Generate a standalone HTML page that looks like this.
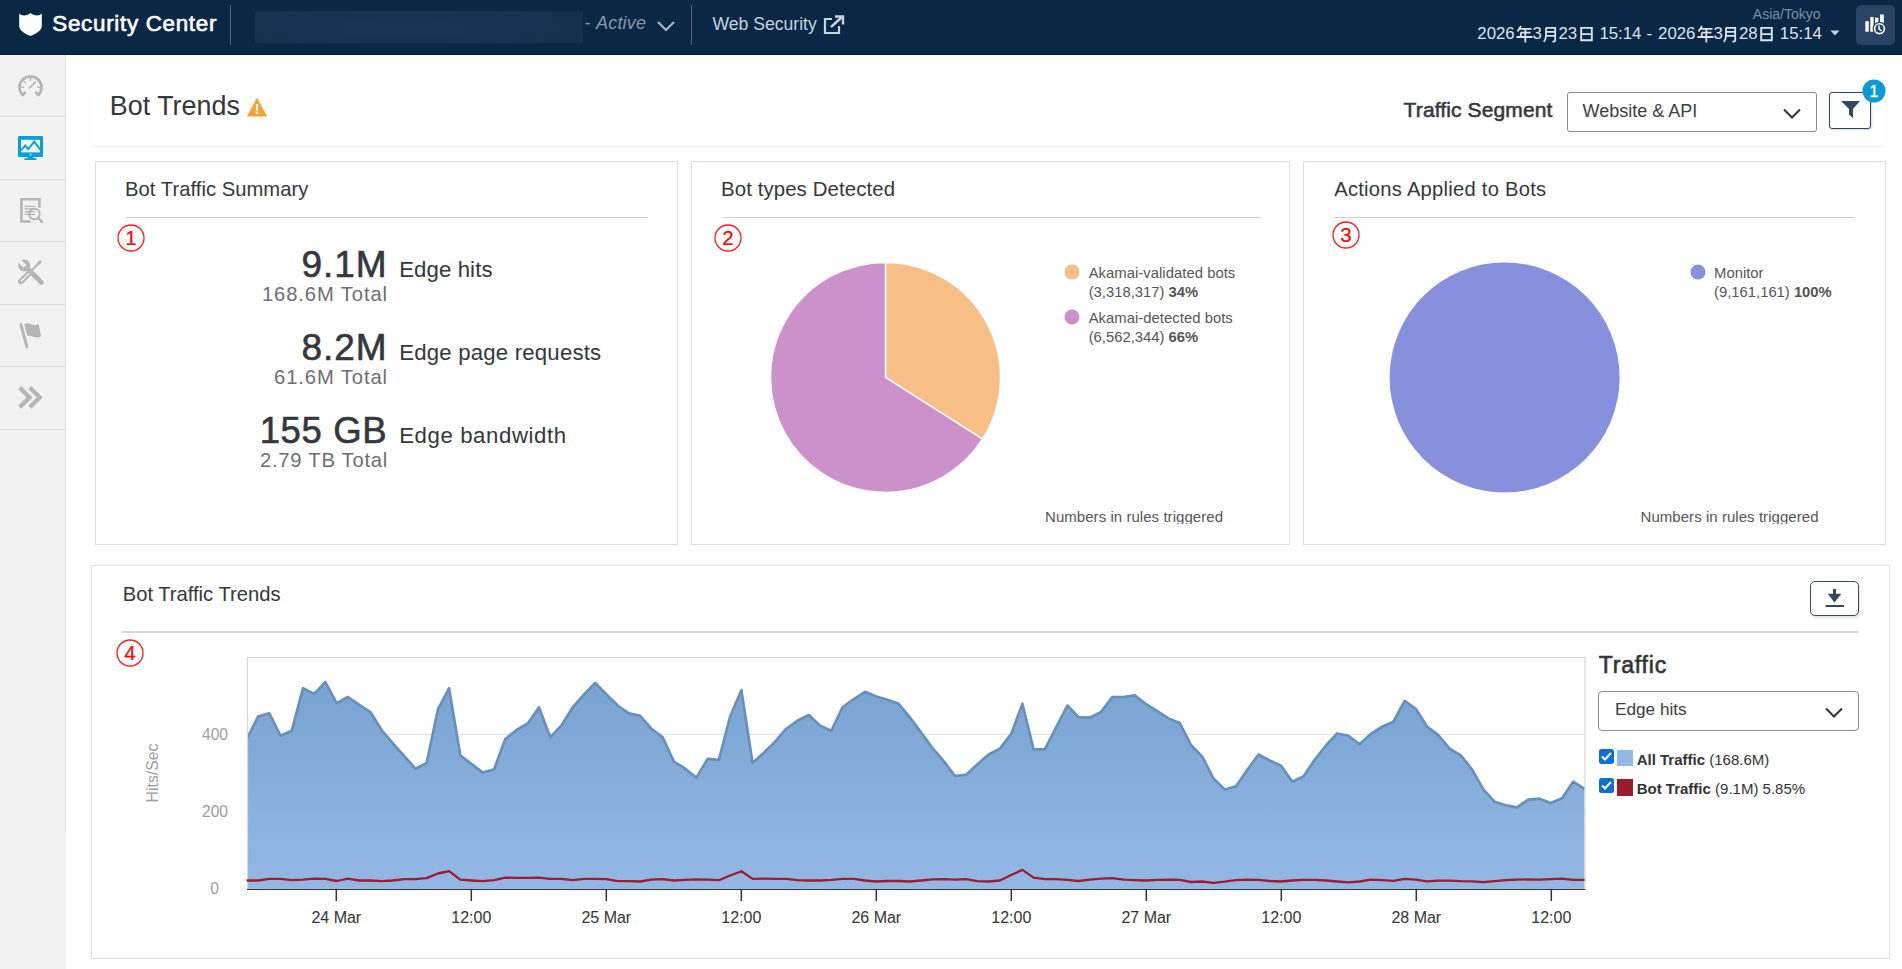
<!DOCTYPE html><html><head><meta charset="utf-8"><style>
*{margin:0;padding:0;box-sizing:border-box}
html,body{width:1902px;height:969px;overflow:hidden;background:#fff;font-family:"Liberation Sans",sans-serif}
.t{position:absolute;line-height:1;white-space:pre}
.a{position:absolute;display:block}
.box{position:absolute}
</style></head><body>
<div class="box" style="left:0;top:0;width:1902px;height:55px;background:#0a2846;border-bottom:1px solid #031c3a"></div>
<svg class="a" style="left:18px;top:12px" width="25" height="25" viewBox="0 0 25 25"><path d="M1.2 1.5 C3 4.2 9.5 4.2 12.5 1 C15.5 4.2 22 4.2 23.8 1.5 L23.8 14 C23.8 18 19 21.5 12.5 24 C6 21.5 1.2 18 1.2 14 Z" fill="#fff"/></svg>
<div class="t" style="left:52.3px;top:12.5px;font-size:22.4px;color:#fff;font-weight:normal;font-style:normal;letter-spacing:0.7px;-webkit-text-stroke:0.65px #fff;">Security Center</div>
<div class="box" style="left:230px;top:5px;width:1px;height:40px;background:#51657d"></div>
<div class="box" style="left:255px;top:11px;width:328px;height:32px;background:radial-gradient(ellipse 60% 80% at 45% 50%,#183756,#13304f 100%)"></div>
<div class="t" style="left:584.5px;top:14.3px;font-size:18px;color:#8a97a8;font-weight:normal;font-style:normal;">-</div>
<div class="t" style="left:596.0px;top:14.3px;font-size:18px;color:#8a97a8;font-weight:normal;font-style:italic;letter-spacing:0.2px;">Active</div>
<svg class="a" style="left:656px;top:19px" width="20" height="14"><path d="M2 3 L10 11 L18 3" fill="none" stroke="#a9b7c6" stroke-width="2.2"/></svg>
<div class="box" style="left:691px;top:5px;width:1px;height:40px;background:#51657d"></div>
<div class="t" style="left:712.5px;top:15.7px;font-size:17.6px;color:#c6d2de;font-weight:normal;font-style:normal;">Web Security</div>
<svg class="a" style="left:823px;top:15px" width="22" height="20" viewBox="0 0 22 20"><path d="M9 4 H2 V18 H16 V11" fill="none" stroke="#c6d2de" stroke-width="2.2"/><path d="M8 12 L19 2 M12 1.5 H20 V9.5" fill="none" stroke="#c6d2de" stroke-width="2.4"/></svg>
<div class="t" style="right:81.5px;top:7.3px;font-size:14px;color:#7d8ea3;font-weight:normal;font-style:normal;">Asia/Tokyo</div>
<div class="t" style="left:1477.3px;top:26.1px;font-size:16.8px;color:#dce3ea;font-weight:normal;font-style:normal;">2026</div>
<svg class="a" style="left:1516px;top:25px" width="17" height="18" viewBox="0 0 17 18"><path d="M5 1 L1.5 6.5 M3.6 3.8 H15.5 M4.8 7.6 H14.5 M0.5 12 H16.5 M9.3 3.8 V17.5 M4.8 7.6 V12" fill="none" stroke="#dce3ea" stroke-width="1.8"/></svg><div class="t" style="left:1532.5px;top:26.1px;font-size:16.8px;color:#dce3ea;font-weight:normal;font-style:normal;">3</div>
<svg class="a" style="left:1542.6px;top:26px" width="14" height="17" viewBox="0 0 14 17"><path d="M3 1.8 H12.2 V14.6 C12.2 15.5 11.5 15.7 9.5 15.5 M3 1.8 V9.5 C3 12.3 2.5 14 0.8 15.8 M3 5.9 H12 M3 9.9 H12" fill="none" stroke="#dce3ea" stroke-width="1.8"/></svg><div class="t" style="left:1558.5px;top:26.1px;font-size:16.8px;color:#dce3ea;font-weight:normal;font-style:normal;">23</div>
<svg class="a" style="left:1579.8px;top:26px" width="13" height="16" viewBox="0 0 13 16"><path d="M1.2 1.9 H11.8 V14.2 H1.2 Z M1.2 8.1 H11.8" fill="none" stroke="#dce3ea" stroke-width="1.9"/></svg><div class="t" style="left:1599.4px;top:26.1px;font-size:16.8px;color:#dce3ea;font-weight:normal;font-style:normal;">15:14</div>
<div class="t" style="left:1646.6px;top:26.1px;font-size:16.8px;color:#dce3ea;font-weight:normal;font-style:normal;">-</div>
<div class="t" style="left:1658.1px;top:26.1px;font-size:16.8px;color:#dce3ea;font-weight:normal;font-style:normal;">2026</div>
<svg class="a" style="left:1696.5px;top:25px" width="17" height="18" viewBox="0 0 17 18"><path d="M5 1 L1.5 6.5 M3.6 3.8 H15.5 M4.8 7.6 H14.5 M0.5 12 H16.5 M9.3 3.8 V17.5 M4.8 7.6 V12" fill="none" stroke="#dce3ea" stroke-width="1.8"/></svg><div class="t" style="left:1713.6px;top:26.1px;font-size:16.8px;color:#dce3ea;font-weight:normal;font-style:normal;">3</div>
<svg class="a" style="left:1723px;top:26px" width="14" height="17" viewBox="0 0 14 17"><path d="M3 1.8 H12.2 V14.6 C12.2 15.5 11.5 15.7 9.5 15.5 M3 1.8 V9.5 C3 12.3 2.5 14 0.8 15.8 M3 5.9 H12 M3 9.9 H12" fill="none" stroke="#dce3ea" stroke-width="1.8"/></svg><div class="t" style="left:1739.0px;top:26.1px;font-size:16.8px;color:#dce3ea;font-weight:normal;font-style:normal;">28</div>
<svg class="a" style="left:1760px;top:26px" width="13" height="16" viewBox="0 0 13 16"><path d="M1.2 1.9 H11.8 V14.2 H1.2 Z M1.2 8.1 H11.8" fill="none" stroke="#dce3ea" stroke-width="1.9"/></svg><div class="t" style="left:1779.8px;top:26.1px;font-size:16.8px;color:#dce3ea;font-weight:normal;font-style:normal;">15:14</div>
<svg class="a" style="left:1830px;top:30px" width="10" height="7"><path d="M0.5 0.5 H9.5 L5 5.5Z" fill="#c8d3df"/></svg>
<div class="box" style="left:1856px;top:5px;width:39px;height:40px;background:#284364;border-radius:5px"></div>
<svg class="a" style="left:1850px;top:0px" width="52" height="52" viewBox="0 0 52 52"><rect x="15.3" y="21.2" width="3.5" height="10.5" fill="#fff"/><rect x="20.3" y="16.9" width="3.3" height="14.8" fill="#fff"/><rect x="25" y="17.7" width="3.4" height="6" fill="#fff"/><rect x="30" y="14.5" width="3.8" height="9" fill="#fff"/><circle cx="29.5" cy="28.7" r="6.9" fill="#284364"/><circle cx="29.5" cy="28.7" r="4.9" fill="none" stroke="#fff" stroke-width="1.6"/><path d="M29 25.6 V29 L31.6 31" fill="none" stroke="#fff" stroke-width="1.5"/></svg>
<div class="box" style="left:0;top:55px;width:66px;height:914px;background:#f2f2f2"></div>
<div class="box" style="left:65px;top:55px;width:1px;height:778px;background:#dedede"></div>
<div class="box" style="left:0;top:116px;width:65px;height:1px;background:#dcdcdc"></div>
<div class="box" style="left:0;top:179px;width:65px;height:1px;background:#dcdcdc"></div>
<div class="box" style="left:0;top:241px;width:65px;height:1px;background:#dcdcdc"></div>
<div class="box" style="left:0;top:304px;width:65px;height:1px;background:#dcdcdc"></div>
<div class="box" style="left:0;top:366px;width:65px;height:1px;background:#dcdcdc"></div>
<div class="box" style="left:0;top:429px;width:65px;height:1px;background:#dcdcdc"></div>
<svg class="a" style="left:10px;top:65px" width="40" height="40" viewBox="0 0 40 40"><path d="M15.6 27 L12.6 30 A11 11 0 1 1 28.4 30 L25.4 27" fill="none" stroke="#b5b5b5" stroke-width="2.7" stroke-linejoin="round"/><path d="M20.5 12.8 V15.8 M14 16.2 L15.7 17.9 M11.2 22.3 H13.9 M27 22.3 H29.8" stroke="#b5b5b5" stroke-width="1.4"/><path d="M19.1 23.5 L25.8 16.7" stroke="#b5b5b5" stroke-width="1.7"/></svg>
<svg class="a" style="left:10px;top:128px" width="40" height="40" viewBox="0 0 40 40"><rect x="8" y="8" width="25" height="21" rx="1.2" fill="#03a0d9"/><rect x="11" y="11.8" width="19" height="12.6" fill="#f3f3f3"/><path d="M11 22.3 L15.3 17.5 L18 21.3 L24.3 13.6 L30.2 21.8" fill="none" stroke="#03a0d9" stroke-width="1.9"/><circle cx="20.5" cy="26.4" r="0.9" fill="#f3f3f3"/><path d="M18.2 28.8 H22.8 C23 30 24.5 30.4 26.5 30.6 V31.9 H14.4 V30.6 C16.4 30.4 18 30 18.2 28.8 Z" fill="#03a0d9"/></svg>
<svg class="a" style="left:10px;top:190px" width="40" height="40" viewBox="0 0 40 40"><path d="M20.5 31.5 H11.4 V9.3 H29.4 V17.8" fill="none" stroke="#b5b5b5" stroke-width="2.6"/><path d="M14.5 16.3 H25.2 M14.5 18.9 H25 M14.5 21.7 H25 M14.5 24.4 H25" stroke="#b5b5b5" stroke-width="1.3"/><circle cx="24.4" cy="24" r="5.3" fill="none" stroke="#b5b5b5" stroke-width="1.9"/><path d="M28.3 28 L32 31.8" stroke="#b5b5b5" stroke-width="2.4" stroke-linecap="round"/></svg>
<svg class="a" style="left:12px;top:252px" width="38" height="40" viewBox="0 0 38 40"><path d="M16.5 17.5 L29.3 30.2" stroke="#b5b5b5" stroke-width="5" stroke-linecap="round"/><circle cx="12.2" cy="13.6" r="6" fill="#b5b5b5"/><path d="M8.2 9.6 L11.6 13" stroke="#f2f2f2" stroke-width="3.8" stroke-linecap="square"/><path d="M6.5 8.2 L10.2 4.6" stroke="#f2f2f2" stroke-width="3"/><path d="M18.5 19.5 L27 11" stroke="#b5b5b5" stroke-width="1.8"/><path d="M26.6 11.3 L28 9.9" stroke="#b5b5b5" stroke-width="3" stroke-linecap="round"/><path d="M17.8 20.5 L8.8 29.5" stroke="#b5b5b5" stroke-width="5.4" stroke-linecap="round"/><path d="M16.6 21.7 L9.3 29" stroke="#f2f2f2" stroke-width="1.5" stroke-linecap="round"/></svg>
<svg class="a" style="left:10px;top:312px" width="40" height="40" viewBox="0 0 40 40"><path d="M10.9 12.6 L16.9 34.9" stroke="#b5b5b5" stroke-width="2.9" stroke-linecap="round"/><path d="M14.2 12.3 C16 11 19 10.8 21 12 C23 13.5 26 13.8 28.6 11.8 L31 24.2 C28.5 25.8 25 25.8 22.5 24.5 C20.5 23.5 18.5 23.5 17.3 23.9 Z" fill="#b5b5b5"/></svg>
<svg class="a" style="left:10px;top:378px" width="40" height="40" viewBox="0 0 40 40"><path d="M9.7 9.6 L19.5 19.4 L9.7 29.2 M19.8 9.6 L29.6 19.4 L19.8 29.2" fill="none" stroke="#b5b5b5" stroke-width="4.3"/></svg>
<div class="box" style="left:90px;top:88px;width:1796px;height:57px;box-shadow:0 2px 3px rgba(0,0,0,0.06);background:#fff"></div>
<div class="t" style="left:109.8px;top:92.5px;font-size:26.9px;color:#34373c;font-weight:normal;font-style:normal;">Bot Trends</div>
<svg class="a" style="left:247px;top:98px" width="20" height="19" viewBox="0 0 20 19"><path d="M10 0.8 L19.2 18 H0.8 Z" fill="#f5a13a" stroke="#f5a13a" stroke-width="1.2" stroke-linejoin="round"/><rect x="8.9" y="6" width="2.2" height="6.5" fill="#fff"/><rect x="8.9" y="13.8" width="2.2" height="2.2" fill="#fff"/></svg>
<div class="t" style="left:1403.6px;top:98.5px;font-size:21px;color:#34373c;font-weight:normal;font-style:normal;letter-spacing:0.12px;-webkit-text-stroke:0.55px #34373c;">Traffic Segment</div>
<div class="box" style="left:1567px;top:92px;width:250px;height:40px;border:1px solid #8a8a8a;border-radius:3px;background:#fff"></div>
<div class="t" style="left:1582.5px;top:101.9px;font-size:18px;color:#3a3d42;font-weight:normal;font-style:normal;">Website & API</div>
<svg class="a" style="left:1782px;top:107px" width="20" height="13"><path d="M2 2.5 L10 10.5 L18 2.5" fill="none" stroke="#333" stroke-width="2"/></svg>
<div class="box" style="left:1829px;top:92px;width:42px;height:37px;border:1.5px solid #2c4661;border-radius:3px;background:#fff;box-shadow:1px 1px 2px rgba(0,0,0,0.15)"></div>
<svg class="a" style="left:1840px;top:100px" width="22" height="19" viewBox="0 0 22 19"><path d="M1 1 H20 L13 9 V18 L9 14.5 V9 Z" fill="#34495e"/></svg>
<svg class="a" style="left:1862px;top:79px" width="24" height="24"><circle cx="12" cy="12" r="11.5" fill="#0a9bd6"/><text x="12" y="17.8" text-anchor="middle" font-family="Liberation Sans" font-size="16" fill="#fff" stroke="#fff" stroke-width="0.4">1</text></svg>
<div class="box" style="left:95px;top:161px;width:583px;height:384px;border:1px solid #dcdce2;background:#fff"></div>
<div class="box" style="left:691px;top:161px;width:599px;height:384px;border:1px solid #dcdce2;background:#fff"></div>
<div class="box" style="left:1303px;top:161px;width:583px;height:384px;border:1px solid #dcdce2;background:#fff"></div>
<div class="box" style="left:91px;top:565px;width:1799px;height:394px;border:1px solid #dcdce2;background:#fff"></div>
<div class="t" style="left:125.0px;top:179.2px;font-size:20.2px;color:#34373c;font-weight:normal;font-style:normal;letter-spacing:0.05px;">Bot Traffic Summary</div>
<div class="box" style="left:126px;top:217px;width:522px;height:1px;background:#cfcfcf"></div>
<div class="t" style="left:721.0px;top:179.0px;font-size:20.4px;color:#34373c;font-weight:normal;font-style:normal;letter-spacing:0.1px;">Bot types Detected</div>
<div class="box" style="left:722px;top:217px;width:538px;height:1px;background:#cfcfcf"></div>
<div class="t" style="left:1334.2px;top:179.2px;font-size:20.2px;color:#34373c;font-weight:normal;font-style:normal;letter-spacing:0.25px;">Actions Applied to Bots</div>
<div class="box" style="left:1334px;top:217px;width:521px;height:1px;background:#cfcfcf"></div>
<svg class="a" style="left:116.6px;top:224px" width="28" height="28"><circle cx="14" cy="14" r="13" fill="none" stroke="#ff1a1a" stroke-width="1.3"/><text x="14" y="21.2" text-anchor="middle" font-family="Liberation Sans" font-size="20.5" fill="#ff0000" stroke="#ff0000" stroke-width="0.2">1</text></svg>
<svg class="a" style="left:713.5px;top:224px" width="28" height="28"><circle cx="14" cy="14" r="13" fill="none" stroke="#ff1a1a" stroke-width="1.3"/><text x="14" y="21.2" text-anchor="middle" font-family="Liberation Sans" font-size="20.5" fill="#ff0000" stroke="#ff0000" stroke-width="0.2">2</text></svg>
<svg class="a" style="left:1331.6px;top:220.5px" width="28" height="28"><circle cx="14" cy="14" r="13" fill="none" stroke="#ff1a1a" stroke-width="1.3"/><text x="14" y="21.2" text-anchor="middle" font-family="Liberation Sans" font-size="20.5" fill="#ff0000" stroke="#ff0000" stroke-width="0.2">3</text></svg>
<svg class="a" style="left:115.5px;top:639.3px" width="28" height="28"><circle cx="14" cy="14" r="13" fill="none" stroke="#ff1a1a" stroke-width="1.3"/><text x="14" y="21.2" text-anchor="middle" font-family="Liberation Sans" font-size="20.5" fill="#ff0000" stroke="#ff0000" stroke-width="0.2">4</text></svg>
<div class="t" style="right:1514.6px;top:246.0px;font-size:37px;color:#34373c;font-weight:normal;font-style:normal;letter-spacing:0.9px;-webkit-text-stroke:0.6px #34373c;">9.1M</div>
<div class="t" style="left:399.2px;top:259.0px;font-size:22.2px;color:#34373c;font-weight:normal;font-style:normal;letter-spacing:0.1px;">Edge hits</div>
<div class="t" style="right:1514.0px;top:284.0px;font-size:20.2px;color:#6d6e71;font-weight:normal;font-style:normal;letter-spacing:0.9px;">168.6M Total</div>
<div class="t" style="right:1514.6px;top:329.3px;font-size:37px;color:#34373c;font-weight:normal;font-style:normal;letter-spacing:0.9px;-webkit-text-stroke:0.6px #34373c;">8.2M</div>
<div class="t" style="left:399.2px;top:342.3px;font-size:22.2px;color:#34373c;font-weight:normal;font-style:normal;letter-spacing:0.2px;">Edge page requests</div>
<div class="t" style="right:1514.0px;top:367.3px;font-size:20.2px;color:#6d6e71;font-weight:normal;font-style:normal;letter-spacing:0.9px;">61.6M Total</div>
<div class="t" style="right:1514.9px;top:412.7px;font-size:36.5px;color:#34373c;font-weight:normal;font-style:normal;letter-spacing:0.6px;-webkit-text-stroke:0.6px #34373c;">155 GB</div>
<div class="t" style="left:399.2px;top:425.3px;font-size:22.2px;color:#34373c;font-weight:normal;font-style:normal;letter-spacing:0.6px;">Edge bandwidth</div>
<div class="t" style="right:1514.0px;top:450.3px;font-size:20.2px;color:#6d6e71;font-weight:normal;font-style:normal;letter-spacing:0.75px;">2.79 TB Total</div>
<svg class="a" style="left:0;top:0" width="1902" height="969"><path d="M885.5 377.4 L885.5 262.4 A115 115 0 0 1 982.60 439.02 Z" fill="#f7bf85" stroke="#fff" stroke-width="1.5" stroke-linejoin="round"/><path d="M885.5 377.4 L982.60 439.02 A115 115 0 1 1 885.5 262.4 Z" fill="#cc90cb" stroke="#fff" stroke-width="1.5" stroke-linejoin="round"/></svg>
<svg class="a" style="left:1389px;top:262px" width="232" height="232"><circle cx="115.6" cy="115.4" r="115" fill="#8690dc"/></svg>
<svg class="a" style="left:1064px;top:264px" width="16" height="16"><circle cx="8" cy="8" r="7.5" fill="#f7bf85"/></svg>
<div class="t" style="left:1088.7px;top:266.0px;font-size:14.8px;color:#555;font-weight:normal;font-style:normal;letter-spacing:0.05px;">Akamai-validated bots</div>
<div class="t" style="left:1088.7px;top:284.9px;font-size:14.8px;color:#555;font-weight:normal;font-style:normal;">(3,318,317) <b>34%</b></div>
<svg class="a" style="left:1064px;top:309px" width="16" height="16"><circle cx="8" cy="8" r="7.5" fill="#cc90cb"/></svg>
<div class="t" style="left:1088.7px;top:310.7px;font-size:14.8px;color:#555;font-weight:normal;font-style:normal;letter-spacing:0.05px;">Akamai-detected bots</div>
<div class="t" style="left:1088.7px;top:329.6px;font-size:14.8px;color:#555;font-weight:normal;font-style:normal;">(6,562,344) <b>66%</b></div>
<div class="box" style="left:1000px;top:500px;width:260px;height:24px;overflow:hidden"><div class="t" style="left:45.0px;top:8.9px;font-size:15px;color:#555;font-weight:normal;font-style:normal;letter-spacing:0.05px;">Numbers in rules triggered</div>
</div><svg class="a" style="left:1690px;top:264px" width="16" height="16"><circle cx="8" cy="8" r="7.5" fill="#8690dc"/></svg>
<div class="t" style="left:1714.1px;top:266.0px;font-size:14.8px;color:#555;font-weight:normal;font-style:normal;">Monitor</div>
<div class="t" style="left:1714.1px;top:284.9px;font-size:14.8px;color:#555;font-weight:normal;font-style:normal;">(9,161,161) <b>100%</b></div>
<div class="box" style="left:1600px;top:500px;width:260px;height:24px;overflow:hidden"><div class="t" style="left:40.5px;top:8.9px;font-size:15px;color:#555;font-weight:normal;font-style:normal;letter-spacing:0.05px;">Numbers in rules triggered</div>
</div><div class="t" style="left:122.7px;top:583.6px;font-size:20.2px;color:#34373c;font-weight:normal;font-style:normal;">Bot Traffic Trends</div>
<div class="box" style="left:1810px;top:581px;width:49px;height:35px;border:1.6px solid #34495e;border-radius:5px;background:#fff;box-shadow:1px 2px 3px rgba(0,0,0,0.12)"></div>
<svg class="a" style="left:1824px;top:588px" width="22" height="20"><rect x="9" y="1" width="3" height="6" fill="#34495e"/><path d="M3.7 5.8 H17.3 L10.5 14.5 Z" fill="#34495e"/><rect x="1.5" y="17" width="18.5" height="2" fill="#34495e"/></svg>
<div class="box" style="left:122px;top:631px;width:1737px;height:2px;background:#d6d6d6"></div>
<svg class="a" style="left:0;top:0" width="1902" height="969">
<defs><clipPath id="pc"><rect x="247.5" y="640" width="1338" height="260"/></clipPath><linearGradient id="g" x1="0" y1="0" x2="0" y2="1"><stop offset="0" stop-color="#79a3d1"/><stop offset="1" stop-color="#94b8e6"/></linearGradient></defs>
<path d="M247.5 734.5 H1585 M247.5 811.5 H1585" stroke="#e3e3e3" stroke-width="1"/>
<g clip-path="url(#pc)"><path d="M246.7 889 L246.7 739.0 L258.0 716.6 L269.2 713.2 L280.5 735.7 L291.7 730.8 L303.0 688.2 L314.2 693.9 L325.4 682.0 L336.7 703.2 L347.9 697.0 L359.2 704.7 L370.4 712.0 L381.6 730.0 L392.9 743.4 L404.1 755.8 L415.4 768.7 L426.6 763.0 L437.9 709.4 L449.1 688.2 L460.3 755.3 L471.6 764.0 L482.8 772.6 L494.1 769.2 L505.3 739.0 L516.5 730.0 L527.8 723.5 L539.0 707.3 L550.3 737.2 L561.5 725.4 L572.7 707.3 L584.0 694.4 L595.2 683.0 L606.5 694.4 L617.7 705.5 L629.0 713.2 L640.2 715.8 L651.4 728.7 L662.7 737.2 L673.9 761.5 L685.2 768.7 L696.4 777.7 L707.6 758.9 L718.9 759.7 L730.1 716.6 L741.4 690.0 L752.6 763.0 L763.8 752.7 L775.1 741.6 L786.3 728.7 L797.6 720.5 L808.8 715.0 L820.1 725.6 L831.3 730.8 L842.5 707.3 L853.8 699.0 L865.0 691.8 L876.3 696.5 L887.5 699.8 L898.7 703.7 L910.0 717.6 L921.2 732.6 L932.5 748.0 L943.7 761.0 L955.0 776.0 L966.2 774.6 L977.4 764.3 L988.7 754.5 L999.9 748.6 L1011.2 733.9 L1022.4 703.7 L1033.6 749.4 L1044.9 749.4 L1056.1 727.4 L1067.4 705.5 L1078.6 717.1 L1089.8 717.6 L1101.1 711.9 L1112.3 697.0 L1123.6 697.0 L1134.8 695.4 L1146.1 704.2 L1157.3 711.2 L1168.5 718.4 L1179.8 723.0 L1191.0 745.0 L1202.3 756.6 L1213.5 778.5 L1224.7 789.4 L1236.0 786.3 L1247.2 770.0 L1258.5 754.5 L1269.7 760.5 L1280.9 765.6 L1292.2 781.6 L1303.4 776.5 L1314.7 759.7 L1325.9 745.5 L1337.2 733.4 L1348.4 735.7 L1359.6 744.2 L1370.9 733.9 L1382.1 726.6 L1393.4 721.7 L1404.6 700.8 L1415.8 708.8 L1427.1 726.6 L1438.3 735.1 L1449.6 748.6 L1460.8 755.3 L1472.1 769.5 L1483.3 789.3 L1494.5 801.7 L1505.8 805.3 L1517.0 807.4 L1528.3 799.6 L1539.5 798.6 L1550.7 803.0 L1562.0 798.3 L1573.2 781.6 L1584.5 788.8 L1584.5 889 Z" fill="url(#g)" />
<path d="M246.7 739.0 L258.0 716.6 L269.2 713.2 L280.5 735.7 L291.7 730.8 L303.0 688.2 L314.2 693.9 L325.4 682.0 L336.7 703.2 L347.9 697.0 L359.2 704.7 L370.4 712.0 L381.6 730.0 L392.9 743.4 L404.1 755.8 L415.4 768.7 L426.6 763.0 L437.9 709.4 L449.1 688.2 L460.3 755.3 L471.6 764.0 L482.8 772.6 L494.1 769.2 L505.3 739.0 L516.5 730.0 L527.8 723.5 L539.0 707.3 L550.3 737.2 L561.5 725.4 L572.7 707.3 L584.0 694.4 L595.2 683.0 L606.5 694.4 L617.7 705.5 L629.0 713.2 L640.2 715.8 L651.4 728.7 L662.7 737.2 L673.9 761.5 L685.2 768.7 L696.4 777.7 L707.6 758.9 L718.9 759.7 L730.1 716.6 L741.4 690.0 L752.6 763.0 L763.8 752.7 L775.1 741.6 L786.3 728.7 L797.6 720.5 L808.8 715.0 L820.1 725.6 L831.3 730.8 L842.5 707.3 L853.8 699.0 L865.0 691.8 L876.3 696.5 L887.5 699.8 L898.7 703.7 L910.0 717.6 L921.2 732.6 L932.5 748.0 L943.7 761.0 L955.0 776.0 L966.2 774.6 L977.4 764.3 L988.7 754.5 L999.9 748.6 L1011.2 733.9 L1022.4 703.7 L1033.6 749.4 L1044.9 749.4 L1056.1 727.4 L1067.4 705.5 L1078.6 717.1 L1089.8 717.6 L1101.1 711.9 L1112.3 697.0 L1123.6 697.0 L1134.8 695.4 L1146.1 704.2 L1157.3 711.2 L1168.5 718.4 L1179.8 723.0 L1191.0 745.0 L1202.3 756.6 L1213.5 778.5 L1224.7 789.4 L1236.0 786.3 L1247.2 770.0 L1258.5 754.5 L1269.7 760.5 L1280.9 765.6 L1292.2 781.6 L1303.4 776.5 L1314.7 759.7 L1325.9 745.5 L1337.2 733.4 L1348.4 735.7 L1359.6 744.2 L1370.9 733.9 L1382.1 726.6 L1393.4 721.7 L1404.6 700.8 L1415.8 708.8 L1427.1 726.6 L1438.3 735.1 L1449.6 748.6 L1460.8 755.3 L1472.1 769.5 L1483.3 789.3 L1494.5 801.7 L1505.8 805.3 L1517.0 807.4 L1528.3 799.6 L1539.5 798.6 L1550.7 803.0 L1562.0 798.3 L1573.2 781.6 L1584.5 788.8" fill="none" stroke="#6590bc" stroke-width="2.6" stroke-linejoin="round"/></g>
<rect x="247.5" y="657.5" width="1337.5" height="232" fill="none" stroke="#d8d8d8" stroke-width="1.2"/>
<path d="M246.7 880.5 L258.0 880.5 L269.2 878.9 L280.5 878.9 L291.7 880.2 L303.0 879.7 L314.2 878.6 L325.4 878.9 L336.7 881.0 L347.9 878.6 L359.2 880.5 L370.4 880.5 L381.6 881.2 L392.9 880.5 L404.1 879.2 L415.4 879.2 L426.6 878.1 L437.9 873.5 L449.1 871.2 L460.3 879.7 L471.6 880.5 L482.8 881.2 L494.1 880.2 L505.3 877.6 L516.5 877.9 L527.8 877.9 L539.0 877.6 L550.3 878.9 L561.5 878.9 L572.7 880.2 L584.0 878.9 L595.2 878.9 L606.5 879.2 L617.7 881.2 L629.0 881.2 L640.2 881.5 L651.4 879.7 L662.7 879.2 L673.9 880.5 L685.2 879.9 L696.4 879.4 L707.6 879.7 L718.9 880.2 L730.1 875.5 L741.4 871.2 L752.6 878.9 L763.8 878.6 L775.1 878.9 L786.3 878.9 L797.6 880.2 L808.8 880.5 L820.1 880.5 L831.3 879.9 L842.5 878.9 L853.8 878.9 L865.0 880.5 L876.3 881.5 L887.5 881.0 L898.7 881.0 L910.0 881.5 L921.2 880.5 L932.5 879.4 L943.7 879.2 L955.0 879.7 L966.2 879.2 L977.4 881.2 L988.7 881.5 L999.9 880.5 L1011.2 875.0 L1022.4 869.9 L1033.6 877.6 L1044.9 879.2 L1056.1 879.2 L1067.4 879.9 L1078.6 881.0 L1089.8 879.7 L1101.1 878.6 L1112.3 878.1 L1123.6 879.7 L1134.8 880.2 L1146.1 880.5 L1157.3 879.9 L1168.5 879.7 L1179.8 879.9 L1191.0 882.0 L1202.3 881.5 L1213.5 882.8 L1224.7 881.7 L1236.0 880.2 L1247.2 879.7 L1258.5 879.9 L1269.7 881.0 L1280.9 881.5 L1292.2 880.5 L1303.4 879.9 L1314.7 879.9 L1325.9 880.5 L1337.2 881.5 L1348.4 882.3 L1359.6 881.5 L1370.9 879.7 L1382.1 880.2 L1393.4 880.9 L1404.6 878.8 L1415.8 879.6 L1427.1 881.4 L1438.3 880.7 L1449.6 880.7 L1460.8 881.2 L1472.1 881.4 L1483.3 882.2 L1494.5 881.2 L1505.8 880.1 L1517.0 879.6 L1528.3 879.4 L1539.5 879.6 L1550.7 879.1 L1562.0 878.6 L1573.2 879.9 L1584.5 879.9" fill="none" stroke="#a01c2a" stroke-width="2.3" stroke-linejoin="round"/>
<path d="M247 889.5 H1585.5" stroke="#333" stroke-width="1.1"/>
<path d="M336.3 889 V901" stroke="#333" stroke-width="1.5"/><path d="M471.3 889 V901" stroke="#333" stroke-width="1.5"/><path d="M606.3 889 V901" stroke="#333" stroke-width="1.5"/><path d="M741.3 889 V901" stroke="#333" stroke-width="1.5"/><path d="M876.3 889 V901" stroke="#333" stroke-width="1.5"/><path d="M1011.3 889 V901" stroke="#333" stroke-width="1.5"/><path d="M1146.3 889 V901" stroke="#333" stroke-width="1.5"/><path d="M1281.3 889 V901" stroke="#333" stroke-width="1.5"/><path d="M1416.3 889 V901" stroke="#333" stroke-width="1.5"/><path d="M1551.3 889 V901" stroke="#333" stroke-width="1.5"/>
</svg>
<div class="t" style="right:1674.0px;top:727.2px;font-size:15.6px;color:#9d9d9d;font-weight:normal;font-style:normal;">400</div>
<div class="t" style="right:1674.0px;top:803.9px;font-size:15.6px;color:#9d9d9d;font-weight:normal;font-style:normal;">200</div>
<div class="t" style="right:1683.0px;top:881.0px;font-size:15.6px;color:#9d9d9d;font-weight:normal;font-style:normal;">0</div>
<div class="t" style="left:122.5px;top:764.8px;width:60px;font-size:15.8px;color:#9d9d9d;transform:rotate(-90deg);text-align:center;height:16px">Hits/Sec</div>
<div class="t" style="left:286.3px;width:100px;text-align:center;top:910.3px;font-size:16px;color:#333">24 Mar</div>
<div class="t" style="left:421.3px;width:100px;text-align:center;top:910.3px;font-size:16px;color:#333">12:00</div>
<div class="t" style="left:556.3px;width:100px;text-align:center;top:910.3px;font-size:16px;color:#333">25 Mar</div>
<div class="t" style="left:691.3px;width:100px;text-align:center;top:910.3px;font-size:16px;color:#333">12:00</div>
<div class="t" style="left:826.3px;width:100px;text-align:center;top:910.3px;font-size:16px;color:#333">26 Mar</div>
<div class="t" style="left:961.3px;width:100px;text-align:center;top:910.3px;font-size:16px;color:#333">12:00</div>
<div class="t" style="left:1096.3px;width:100px;text-align:center;top:910.3px;font-size:16px;color:#333">27 Mar</div>
<div class="t" style="left:1231.3px;width:100px;text-align:center;top:910.3px;font-size:16px;color:#333">12:00</div>
<div class="t" style="left:1366.3px;width:100px;text-align:center;top:910.3px;font-size:16px;color:#333">28 Mar</div>
<div class="t" style="left:1501.3px;width:100px;text-align:center;top:910.3px;font-size:16px;color:#333">12:00</div>
<div class="t" style="left:1598.8px;top:653.5px;font-size:23px;color:#333;font-weight:normal;font-style:normal;letter-spacing:0.8px;-webkit-text-stroke:0.6px #333;">Traffic</div>
<div class="box" style="left:1598px;top:691px;width:261px;height:40px;border:1px solid #8a8a8a;border-radius:4px;background:#fff"></div>
<div class="t" style="left:1615.0px;top:701.4px;font-size:17.2px;color:#3a3d42;font-weight:normal;font-style:normal;">Edge hits</div>
<svg class="a" style="left:1824px;top:706px" width="20" height="13"><path d="M2 2.5 L10 10.5 L18 2.5" fill="none" stroke="#333" stroke-width="2"/></svg>
<svg class="a" style="left:1598.5px;top:749px" width="15" height="15"><rect x="0" y="0" width="15" height="15" rx="2.5" fill="#0b6fd7"/><path d="M3 7.5 L6 10.5 L12 4" fill="none" stroke="#fff" stroke-width="2"/></svg>
<div class="box" style="left:1617px;top:750px;width:16px;height:16px;background:#94b8e6"></div>
<div class="t" style="left:1636.7px;top:751.9px;font-size:15px;color:#333;font-weight:normal;font-style:normal;"><b style="font-weight:bold">All Traffic</b> (168.6M)</div>
<svg class="a" style="left:1598.5px;top:778px" width="15" height="15"><rect x="0" y="0" width="15" height="15" rx="2.5" fill="#0b6fd7"/><path d="M3 7.5 L6 10.5 L12 4" fill="none" stroke="#fff" stroke-width="2"/></svg>
<div class="box" style="left:1617px;top:779px;width:16px;height:16.5px;background:#9b1b29"></div>
<div class="t" style="left:1636.7px;top:780.8px;font-size:15px;color:#333;font-weight:normal;font-style:normal;"><b style="font-weight:bold">Bot Traffic</b> (9.1M) 5.85%</div>
</body></html>
